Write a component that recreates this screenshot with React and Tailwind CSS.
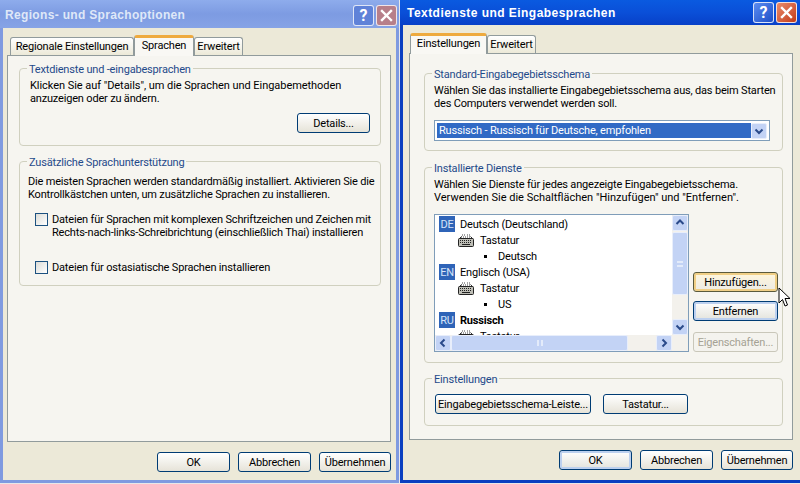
const Btn = ({ w, children, hot, def, disabled }) => (
  <div
    className={`h-[20px] shrink-0 whitespace-nowrap rounded-[3px] border flex items-center justify-center bg-linear-to-b ${
      disabled
        ? "border-[#c9c7ba] from-[#f4f3ee] to-[#f4f3ee] text-[#a5a294]"
        : hot
        ? "border-[#5a5a3c] from-[#fff6dc] to-[#ecebe5] text-black shadow-[inset_0_0_0_2px_#f0cf86]"
        : def
        ? "border-[#003c74] from-white to-[#e3e3dc] text-black shadow-[inset_0_0_0_2px_#bcd0ef]"
        : "border-[#003c74] from-white to-[#e6e3d8] text-black"
    }`}
    style={{ width: w }}
  >
    {children}
  </div>
);

const Group = ({ label, h, className, children }) => (
  <div className={`relative rounded-[4px] border border-[#d0d0bf] ${className || ""}`} style={{ height: h }}>
    <div className="absolute -top-[6px] left-[7px] whitespace-nowrap bg-[#f6f5f0] px-[2px] leading-[13px] text-[#1f4a8a]">{label}</div>
    {children}
  </div>
);

const Tab = ({ active, children, w }) =>
  active ? (
    <div
      className="relative z-10 -mb-px flex h-[21px] items-center justify-center rounded-t-[3px] border-x border-[#919b9c] border-t-[3px] border-t-[#eeaa3e] bg-[#f9f8f4] pb-[3px] text-black"
      style={{ width: w }}
    >
      {children}
    </div>
  ) : (
    <div
      className="flex h-[18px] items-center justify-center whitespace-nowrap rounded-t-[3px] border border-b-0 border-[#919b9c] bg-linear-to-b from-white to-[#ece9d8] text-black"
      style={{ width: w }}
    >
      {children}
    </div>
  );

const TitleButtons = ({ inactive }) => (
  <div className="flex items-center gap-[2px]">
    <div
      className={`flex h-[21px] w-[21px] items-center justify-center rounded-[3px] border border-white/80 text-[16px] font-bold text-white ${
        inactive ? "bg-[#5f82d8]" : "bg-linear-to-br from-[#5c8cf0] to-[#1d4ec8]"
      }`}
    >
      ?
    </div>
    <div
      className={`flex h-[21px] w-[21px] items-center justify-center rounded-[3px] border border-white/80 ${
        inactive ? "bg-[#b77f8a]" : "bg-linear-to-br from-[#e98a6a] to-[#c23a12]"
      }`}
    >
      <svg width="13" height="13" viewBox="0 0 13 13">
        <path d="M2 2 L11 11 M11 2 L2 11" stroke="#fff" strokeWidth="2.4" strokeLinecap="square" />
      </svg>
    </div>
  </div>
);

const Chevron = ({ dir }) => {
  const d = {
    up: "M2.5 7 L6 3.5 L9.5 7",
    down: "M2.5 4.5 L6 8 L9.5 4.5",
    left: "M7.5 2.5 L4 6 L7.5 9.5",
    right: "M4.5 2.5 L8 6 L4.5 9.5",
  }[dir];
  return (
    <div className="flex h-[16px] w-[16px] shrink-0 items-center justify-center rounded-[2px] border border-[#e8eefb] bg-[#c3d3f5]">
      <svg width="12" height="12" viewBox="0 0 12 12">
        <path d={d} fill="none" stroke="#2a4a8a" strokeWidth="2" />
      </svg>
    </div>
  );
};

const Lang = ({ code, children, bold }) => (
  <div className="flex h-[16px] items-center">
    <div className="flex h-[16px] w-[16px] items-center justify-center bg-[#2f64b8] text-[#d7e4f8]">{code}</div>
    <div className={`ml-[5px] ${bold ? "font-bold" : ""}`}>{children}</div>
  </div>
);

const Keyboard = () => (
  <svg width="16" height="13" viewBox="0 0 16 13" className="shrink-0">
    <path d="M4 1 H8 M9 1 H12 M3 3 H13" fill="none" stroke="#444" strokeWidth="1" strokeDasharray="1 1" />
    <path d="M3.5 2.5 L1 5 M12.5 2.5 L15 5" stroke="#333" strokeWidth="1" />
    <rect x="0.5" y="4.5" width="15" height="8" rx="1" fill="#bdbdb5" stroke="#222" />
    <path d="M2 6.5 H14 M2 8.5 H14" stroke="#222" strokeWidth="1" strokeDasharray="1 1" />
    <path d="M4 10.5 H12" stroke="#222" />
  </svg>
);

const KbRow = () => (
  <div className="flex h-[16px] items-center pl-[19px]">
    <Keyboard />
    <div className="ml-[6px]">Tastatur</div>
  </div>
);

const Leaf = ({ children }) => (
  <div className="flex h-[16px] items-center pl-[45px]">
    <div className="h-[3px] w-[3px] bg-black" />
    <div className="ml-[11px]">{children}</div>
  </div>
);

const Check = () => (
  <div className="h-[13px] w-[13px] shrink-0 border border-[#1c5180] bg-linear-to-br from-[#dcdcd7] to-white" />
);

export default function App() {
  return (
    <div
      className="flex h-[484px] w-[800px] items-start overflow-hidden whitespace-nowrap bg-[#e8e8e8] text-[11px] leading-[13px] tracking-[-0.18px]"
      style={{ fontFamily: 'Roboto, "Liberation Sans", sans-serif' }}
    >
      {/* left window */}
      <div className="h-[483px] w-[399px] shrink-0 bg-[#7f9ae0] pb-[3px]">
        <div className="flex h-[28px] items-center justify-between bg-linear-to-b from-[#8eacec] via-[#7d9be2] to-[#86a3e6] pl-[5px] pr-[2px] pt-[2px]">
          <div className="font-['Liberation_Sans'] text-[12px] font-bold tracking-[0.33px] text-[#dfe8f8]">Regions- und Sprachoptionen</div>
          <TitleButtons inactive />
        </div>
        <div className="mx-[3px] h-[452px] bg-[#ece9d8] pl-[4px] pt-[7px]">
          <div className="flex h-[20px] items-end pl-[3px]">
            <Tab w={124}>Regionale Einstellungen</Tab>
            <Tab active w={60}>Sprachen</Tab>
            <Tab w={49}>Erweitert</Tab>
          </div>
          <div className="h-[387px] w-[384px] border border-[#919b9c] bg-[#f6f5f0] pl-[11px] pt-[12px]">
            <Group label="Textdienste und -eingabesprachen" h={78} className="w-[362px]">
              <div className="pl-[10px] pr-[10px] pt-[10px]">
                <div className="tracking-[-0.05px]">Klicken Sie auf "Details", um die Sprachen und Eingabemethoden</div>
                <div>anzuzeigen oder zu ändern.</div>
                <div className="mt-[8px] flex justify-end">
                  <Btn w={73}>Details...</Btn>
                </div>
              </div>
            </Group>
            <Group label="Zusätzliche Sprachunterstützung" h={125} className="mt-[15px] w-[362px]">
              <div className="pl-[8px] pt-[13px]">
                <div>Die meisten Sprachen werden standardmäßig installiert. Aktivieren Sie die</div>
                <div>Kontrollkästchen unten, um zusätzliche Sprachen zu installieren.</div>
                <div className="mt-[12px] flex gap-[4px] pl-[7px]">
                  <Check />
                  <div>
                    <div>Dateien für Sprachen mit komplexen Schriftzeichen und Zeichen mit</div>
                    <div>Rechts-nach-links-Schreibrichtung (einschließlich Thai) installieren</div>
                  </div>
                </div>
                <div className="mt-[22px] flex gap-[4px] pl-[7px]">
                  <Check />
                  <div>Dateien für ostasiatische Sprachen installieren</div>
                </div>
              </div>
            </Group>
          </div>
          <div className="mt-[10px] flex w-[384px] justify-end gap-[8px]">
            <Btn w={73}>OK</Btn>
            <Btn w={73}>Abbrechen</Btn>
            <Btn w={72}>Übernehmen</Btn>
          </div>
        </div>
      </div>

      {/* right window */}
      <div className="ml-[1px] h-[483px] w-[400px] shrink-0 bg-[#0a3fc0] pb-[3px]">
        <div className="flex h-[25px] items-center justify-between bg-linear-to-b from-[#0a5ae0] via-[#0a4fd8] to-[#0840c8] pl-[7px] pr-[3px]">
          <div className="pt-[2px] font-['Liberation_Sans'] text-[12px] font-bold tracking-[0.46px] text-white">Textdienste und Eingabesprachen</div>
          <TitleButtons />
        </div>
        <div className="ml-[3px] h-[455px] bg-[#ece9d8] pl-[6px] pt-[8px]">
          <div className="flex h-[20px] items-end pl-[1px]">
            <Tab active w={77}>Einstellungen</Tab>
            <Tab w={49}>Erweitert</Tab>
          </div>
          <div className="h-[387px] w-[384px] border border-[#919b9c] bg-[#f6f5f0] pl-[14px] pt-[19px]">
            <Group label="Standard-Eingabegebietsschema" h={78} className="w-[359px]">
              <div className="pl-[9px] pt-[10px]">
                <div>Wählen Sie das installierte Eingabegebietsschema aus, das beim Starten</div>
                <div>des Computers verwendet werden soll.</div>
                <div className="mt-[10px] flex h-[21px] w-[336px] items-center border border-[#7f9db9] bg-white p-[2px]">
                  <div className="flex h-full flex-1 items-center bg-[#316ac5] pl-[2px] text-white">
                    Russisch - Russisch für Deutsche, empfohlen
                  </div>
                  <Chevron dir="down" />
                </div>
              </div>
            </Group>
            <Group label="Installierte Dienste" h={196} className="mt-[16px] w-[359px]">
              <div className="pl-[9px] pt-[10px]">
                <div>Wählen Sie Dienste für jedes angezeigte Eingabegebietsschema.</div>
                <div className="tracking-normal">Verwenden Sie die Schaltflächen "Hinzufügen" und "Entfernen".</div>
                <div className="mt-[10px] flex">
                  <div className="flex h-[138px] w-[255px] shrink-0 flex-col border border-[#7f9db9] bg-white">
                    <div className="flex min-h-0 flex-1">
                      <div className="flex-1 overflow-hidden pl-[4px] pt-[1px]">
                        <Lang code="DE">Deutsch (Deutschland)</Lang>
                        <KbRow />
                        <Leaf>Deutsch</Leaf>
                        <Lang code="EN">Englisch (USA)</Lang>
                        <KbRow />
                        <Leaf>US</Leaf>
                        <Lang code="RU" bold>Russisch</Lang>
                        <KbRow />
                      </div>
                      <div className="flex w-[16px] shrink-0 flex-col bg-[#f3f1ec]">
                        <Chevron dir="up" />
                        <div className="mt-[1px] flex h-[63px] items-center justify-center rounded-[2px] border border-[#e8eefb] bg-[#c3d3f5]">
                          <div className="h-[6px] w-[6px] border-y-2 border-[#e3ebfa]" />
                        </div>
                        <div className="flex-1" />
                        <Chevron dir="down" />
                      </div>
                    </div>
                    <div className="flex h-[16px] shrink-0 bg-[#f3f1ec]">
                      <Chevron dir="left" />
                      <div className="flex w-[177px] items-center justify-center rounded-[2px] border border-[#e8eefb] bg-[#c3d3f5]">
                        <div className="h-[6px] w-[6px] border-x-2 border-[#e3ebfa]" />
                      </div>
                      <div className="flex-1" />
                      <Chevron dir="right" />
                      <div className="w-[16px]" />
                    </div>
                  </div>
                  <div className="relative ml-[4px] flex w-[85px] flex-col pt-[58px]">
                    <Btn w={85} hot>Hinzufügen...</Btn>
                    <div className="mt-[9px]">
                      <Btn w={85} def>Entfernen</Btn>
                    </div>
                    <div className="mt-[11px]">
                      <Btn w={85} disabled>Eigenschaften...</Btn>
                    </div>
                    <svg className="absolute left-[85px] top-[73px]" width="13" height="21" viewBox="0 0 13 21">
                      <path d="M1 1 V16 L4.5 12.5 L7 19 L9.5 18 L7 11.5 H12 Z" fill="#fff" stroke="#000" strokeWidth="1" />
                    </svg>
                  </div>
                </div>
              </div>
            </Group>
            <Group label="Einstellungen" h={48} className="mt-[15px] w-[359px]">
              <div className="flex gap-[12px] pl-[10px] pt-[15px]">
                <Btn w={156}>Eingabegebietsschema-Leiste...</Btn>
                <Btn w={85}>Tastatur...</Btn>
              </div>
            </Group>
          </div>
          <div className="mt-[10px] flex w-[384px] justify-end gap-[8px]">
            <Btn w={73} def>OK</Btn>
            <Btn w={73}>Abbrechen</Btn>
            <Btn w={72}>Übernehmen</Btn>
          </div>
        </div>
      </div>
    </div>
  );
}
